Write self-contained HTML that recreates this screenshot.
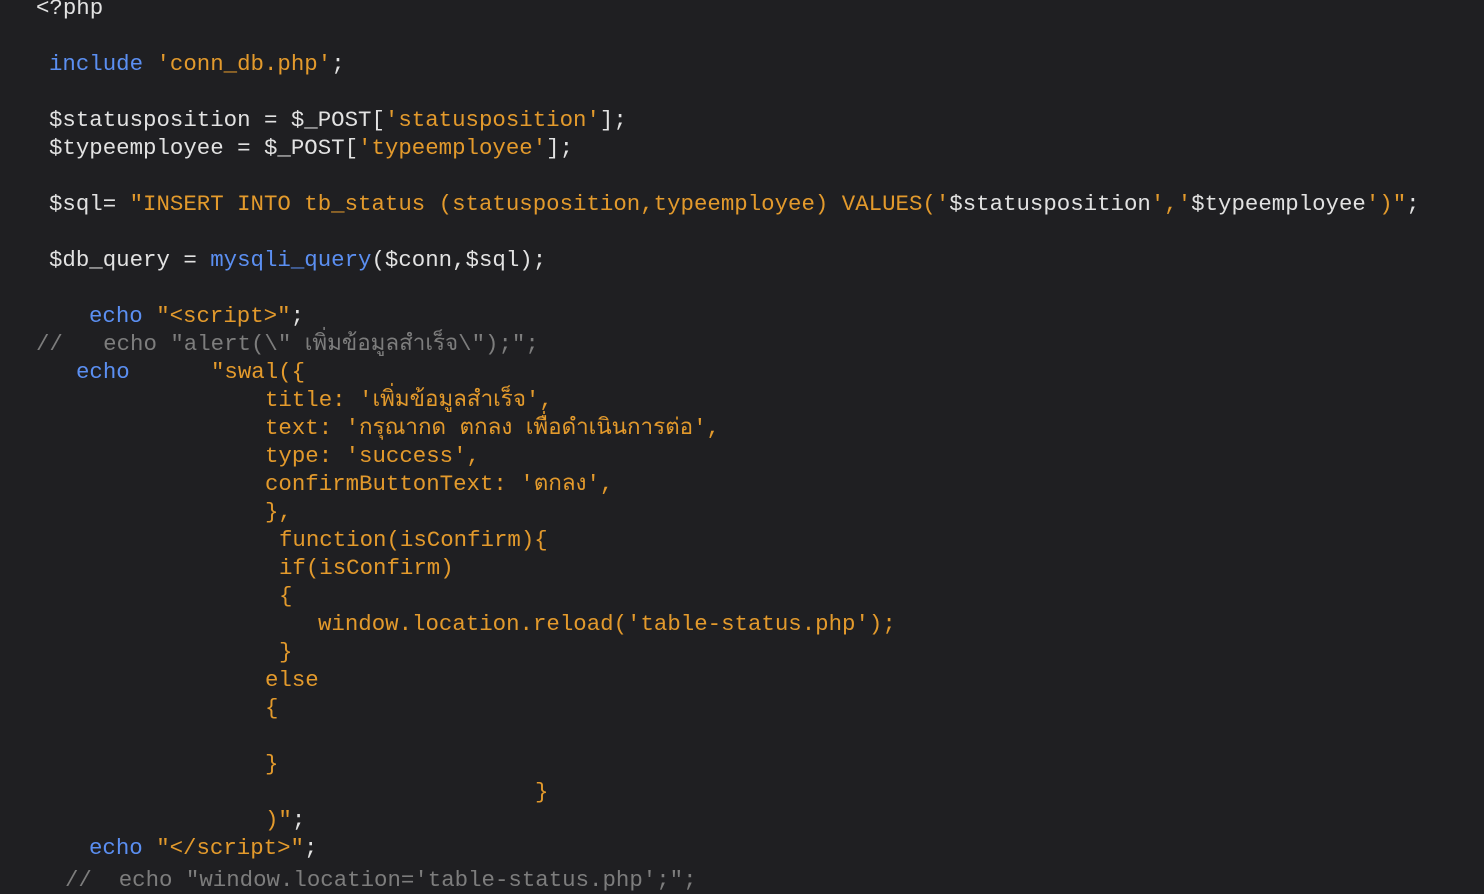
<!DOCTYPE html>
<html><head><meta charset="utf-8"><style>
html,body{margin:0;padding:0;background:#1f1f22;width:1484px;height:875px;overflow:hidden}
.l{position:absolute;height:28px;line-height:28px;white-space:pre;font-family:"Liberation Mono","Noto Sans CJK SC",monospace;font-size:22.4px;color:#e2e2e2}
.b{color:#5b8ff2}.o{color:#e39a2c}.g{color:#7d7d7d}
</style></head><body>
<div class="l" style="top:-6px;left:36px">&lt;?php</div>
<div class="l" style="top:50px;left:49px"><span class="b">include</span> <span class="o">'conn_db.php'</span>;</div>
<div class="l" style="top:106px;left:49px">$statusposition = $_POST[<span class="o">'statusposition'</span>];</div>
<div class="l" style="top:134px;left:49px">$typeemployee = $_POST[<span class="o">'typeemployee'</span>];</div>
<div class="l" style="top:190px;left:49px">$sql= <span class="o">"INSERT INTO tb_status (statusposition,typeemployee) VALUES('</span>$statusposition<span class="o">','</span>$typeemployee<span class="o">')"</span>;</div>
<div class="l" style="top:246px;left:49px">$db_query = <span class="b">mysqli_query</span>($conn,$sql);</div>
<div class="l" style="top:302px;left:89px"><span class="b">echo</span> <span class="o">"&lt;script&gt;"</span>;</div>
<div class="l g" style="top:330px;left:36px">//   echo "alert(\" เพิ่มข้อมูลสำเร็จ\");";</div>
<div class="l" style="top:358px;left:76px"><span class="b">echo</span></div>
<div class="l o" style="top:358px;left:211px">"swal({</div>
<div class="l o" style="top:386px;left:265px">title: 'เพิ่มข้อมูลสำเร็จ',</div>
<div class="l o" style="top:414px;left:265px">text: 'กรุณากด ตกลง เพื่อดำเนินการต่อ',</div>
<div class="l o" style="top:442px;left:265px">type: 'success',</div>
<div class="l o" style="top:470px;left:265px">confirmButtonText: 'ตกลง',</div>
<div class="l o" style="top:498px;left:265px">},</div>
<div class="l o" style="top:526px;left:279px">function(isConfirm){</div>
<div class="l o" style="top:554px;left:279px">if(isConfirm)</div>
<div class="l o" style="top:582px;left:279px">{</div>
<div class="l o" style="top:610px;left:318px">window.location.reload('table-status.php');</div>
<div class="l o" style="top:638px;left:279px">}</div>
<div class="l o" style="top:666px;left:265px">else</div>
<div class="l o" style="top:694px;left:265px">{</div>
<div class="l o" style="top:750px;left:265px">}</div>
<div class="l o" style="top:778px;left:535px">}</div>
<div class="l" style="top:806px;left:265px"><span class="o">)"</span>;</div>
<div class="l" style="top:834px;left:89px"><span class="b">echo</span> <span class="o">"&lt;/script&gt;"</span>;</div>
<div class="l g" style="top:866px;left:65px">//  echo "window.location='table-status.php';";</div>
</body></html>
